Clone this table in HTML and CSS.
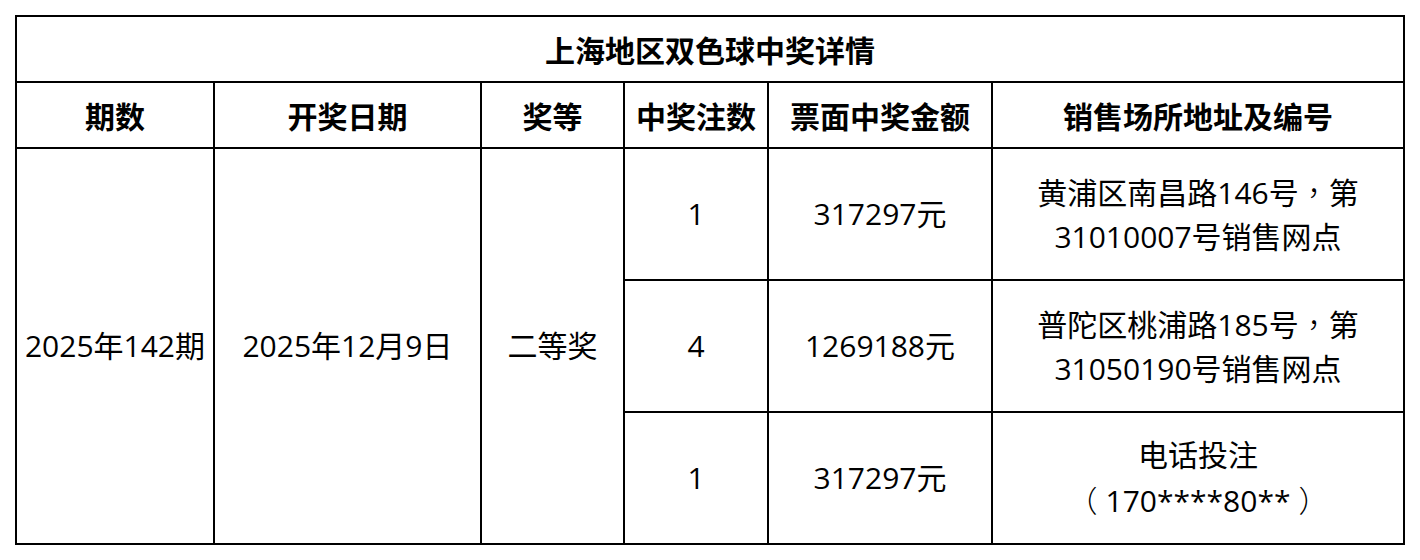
FILE: index.html
```html
<!DOCTYPE html>
<html lang="zh-CN">
<head>
<meta charset="utf-8">
<title>上海地区双色球中奖详情</title>
<link rel="stylesheet" href="styles.css">
</head>
<body>
<table class="prize">
  <colgroup>
    <col class="c1"><col class="c2"><col class="c3"><col class="c4"><col class="c5"><col class="c6">
  </colgroup>
  <tr class="title-row">
    <th colspan="6">上海地区双色球中奖详情</th>
  </tr>
  <tr class="head-row">
    <th>期数</th>
    <th>开奖日期</th>
    <th>奖等</th>
    <th>中奖注数</th>
    <th>票面中奖金额</th>
    <th>销售场所地址及编号</th>
  </tr>
  <tr class="data-row">
    <td rowspan="3">2025年142期</td>
    <td rowspan="3">2025年12月9日</td>
    <td rowspan="3">二等奖</td>
    <td>1</td>
    <td>317297元</td>
    <td class="addr">黄浦区南昌路146号<span class="fw" lang="zh-TW">，</span>第<br>31010007号销售网点</td>
  </tr>
  <tr class="data-row">
    <td>4</td>
    <td>1269188元</td>
    <td class="addr">普陀区桃浦路185号<span class="fw" lang="zh-TW">，</span>第<br>31050190号销售网点</td>
  </tr>
  <tr class="data-row">
    <td>1</td>
    <td>317297元</td>
    <td class="addr">电话投注<br><span class="fw po" lang="zh-TW">（</span>170****80**<span class="fw pc" lang="zh-TW">）</span></td>
  </tr>
</table>
</body>
</html>
```

FILE: styles.css
```css
html, body {
  margin: 0;
  padding: 0;
  background: #ffffff;
}
body {
  padding: 15px 0 0 15px;
  font-family: "Open Sans", "Noto Sans CJK SC", sans-serif;
  color: #000000;
}
.prize {
  border-collapse: collapse;
  table-layout: fixed;
  width: 1390px;
}
.c1 { width: 198px; }
.c2 { width: 267px; }
.c3 { width: 143px; }
.c4 { width: 144px; }
.c5 { width: 224px; }
.c6 { width: 412px; }
.prize th,
.prize td {
  border: 2px solid #000000;
  padding: 0;
  text-align: center;
  vertical-align: middle;
  font-size: 30px;
  line-height: 44px;
  white-space: nowrap;
}
.prize th {
  font-family: "Noto Sans CJK SC", sans-serif;
  font-weight: 700;
}
.fw {
  font-family: "Noto Sans CJK TC", sans-serif;
  font-weight: 300;
}
.po { margin-right: 8px; }
.pc { margin-left: 8px; }
.title-row { height: 66px; }
.head-row { height: 66px; }
.data-row { height: 132px; }
```
